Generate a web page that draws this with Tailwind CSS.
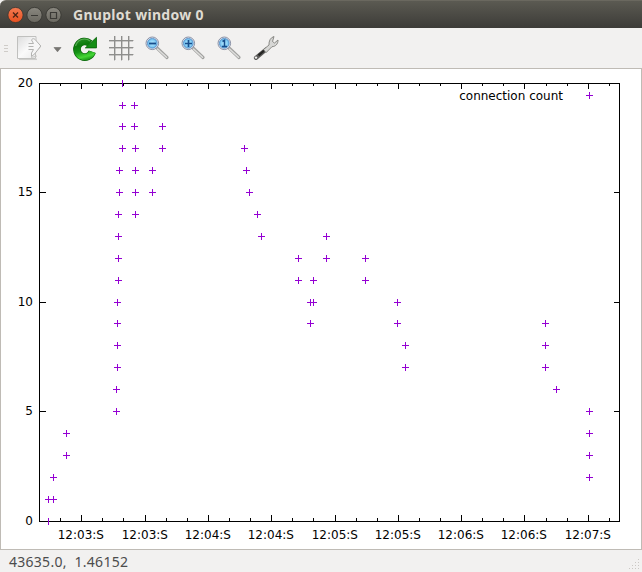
<!DOCTYPE html>
<html lang="en">
<head>
<meta charset="utf-8">
<title>Gnuplot window 0</title>
<script src="https://cdn.jsdelivr.net/npm/@tailwindcss/browser@4"></script>
</head>
<body class="w-[642px] h-[572px] overflow-hidden bg-[#f2f1f0] flex flex-col">
<header class="h-7 shrink-0 flex items-center bg-linear-to-b from-[#5b5a52] to-[#3d3c38] border-t border-[#6a685f] rounded-tl-md pl-[7px]">
  <svg width="56" height="18" viewBox="0 0 56 18" fill="none">
    <defs>
      <linearGradient id="cl" x2="0" y2="1"><stop stop-color="#f47b52"/><stop offset="1" stop-color="#e8501f"/></linearGradient>
      <linearGradient id="gr" x2="0" y2="1"><stop stop-color="#8a8880"/><stop offset="1" stop-color="#6a6860"/></linearGradient>
    </defs>
    <circle cx="8.500" cy="9" r="7.600" fill="url(#cl)" stroke="#3b3630" stroke-width=".8"/>
    <circle cx="27.500" cy="9" r="7.600" fill="url(#gr)" stroke="#34332e" stroke-width=".8"/>
    <circle cx="46.500" cy="9" r="7.600" fill="url(#gr)" stroke="#34332e" stroke-width=".8"/>
    <path d="M6 6.500l5 5M11 6.500l-5 5" stroke="#4b2415" stroke-width="1.300"/>
    <path d="M24 9.500h7M43.500 6.500h6v6h-6z" stroke="#3a3935" stroke-width="1.200"/>
  </svg>
  <h1 class="ml-[10px] font-['Noto_Sans'] font-bold text-[14px] leading-[20px] text-[#dfdbd2] whitespace-pre tracking-[0.29px]">Gnuplot window 0</h1>
</header>
<nav class="h-10 shrink-0 flex items-center">
  <svg width="290" height="40" viewBox="0 28 290 40" fill="none">
    <defs>
      <linearGradient id="pg" x2="1" y2="1"><stop stop-color="#dcdcdc"/><stop offset=".5" stop-color="#fafafa"/><stop offset="1" stop-color="#e6e6e6"/></linearGradient>
      <linearGradient id="gn" gradientUnits="userSpaceOnUse" x1="80" y1="37" x2="86" y2="60"><stop stop-color="#2f962b"/><stop offset=".35" stop-color="#0b7a0b"/><stop offset=".6" stop-color="#159215"/><stop offset=".85" stop-color="#45d636"/><stop offset="1" stop-color="#1a9a18"/></linearGradient>
      <radialGradient id="ln"><stop stop-color="#b9eaff"/><stop offset=".7" stop-color="#83cdf5"/><stop offset="1" stop-color="#5ba3dc"/></radialGradient>
      <g id="lens">
        <path d="M11 11L21.500 21" stroke="#a2a2a0" stroke-width="3.200" stroke-linecap="round"/>
        <path d="M12 12.500L21 20.700" stroke="#dededc" stroke-width="1.500" stroke-linecap="round"/>
        <circle cx="6.800" cy="6.800" r="6.300" fill="#e6e8ef" stroke="#8991a6"/>
        <circle cx="6.800" cy="6.800" r="4.900" fill="url(#ln)" stroke="#5b94cc" stroke-width=".8"/>
      </g>
    </defs>
    <path d="M4 45.500h4M4 48.500h4M4 51.500h4" stroke="#cfccc8"/>
    <path d="M19 59.300h18" stroke="#cfcfcd" stroke-width="1.500"/>
    <path d="M17.500 36.500h18.500v5l4.500 4.500v1l-5 4.500v7h-18z" fill="url(#pg)" stroke="#c0c0be"/>
    <path d="M28.500 43.500h5l-2-3.500c1-2 3-1.500 4 0l5.300 6-5.800 7.500-3.500 3v-3.500l2-3.500h-5M28.500 46.500h5" fill="#f6f6f6" stroke="#b3b3b1" stroke-linejoin="round"/>
    <path d="M31 57.500l6-1.500" stroke="#c8c8c6"/>
    <path d="M54 47.500h7l-3.500 4.300z" fill="#777672" stroke="#777672" stroke-width=".7"/>
    <path d="M89.800 43.300A7.800 7.800 0 1 0 92.200 51.700" stroke="#076207" stroke-width="7.600"/>
    <path d="M96.500 37.300v10.600H85.300z" fill="#118a11" stroke="#076207" stroke-width=".8" stroke-linejoin="round"/>
    <path d="M89.800 43.300A7.800 7.800 0 1 0 92.200 51.700" stroke="url(#gn)" stroke-width="6.400"/>
    <path d="M95.700 39.300v7.800h-8.200z" fill="#158e15"/>
    <path d="M75.500 46c1.500-4.500 5-7 9-7 2 0 4 .7 5.500 2" stroke="#7cc576" stroke-width="1.200" opacity=".6"/>
    <g fill="#8e8e8c" shape-rendering="crispEdges"><path d="M109 40h24v1h-24zM109 47h24v1h-24zM109 54h24v1h-24zM114 36h1v24h-1zM121 36h1v24h-1zM128 36h1v24h-1z" stroke="#8e8e8c" stroke-width=".4"/></g>
    <use href="#lens" x="145.500" y="36.500"/>
    <path d="M149 43.500h7" stroke="#164d8c" stroke-width="1.800"/>
    <use href="#lens" x="181.500" y="36.500"/>
    <path d="M185 43.500h7M188.500 40v7" stroke="#164d8c" stroke-width="1.700"/>
    <use href="#lens" x="217.500" y="36.500"/>
    <path d="M222.500 41.500l2-1.200v6M222 46.500h5" stroke="#164d8c" stroke-width="1.500"/>
    <path d="M266 49.500L256 57.800" stroke="#5b5b59" stroke-width="4.200" stroke-linecap="round"/>
    <path d="M266 49L258.500 55.300" stroke="#252523" stroke-width="2.200"/>
    <circle cx="256" cy="57.600" r="1.200" fill="#f2f1f0"/>
    <path d="M263.500 49.500l5.500-4.500c-.3-4 1.500-7.500 5-8.500l-1.500 5 2 1.500 3.500-3c.2 4-2.500 6.500-6 6.700l-6 6z" fill="#d7d7d5" stroke="#7f7f7b" stroke-width=".9" stroke-linejoin="round"/>
  </svg>
</nav>
<main class="h-[482px] shrink-0 border border-[#bfbbb5] bg-white">
  <svg id="plot" class="block" width="640" height="480" viewBox="1 69 640 480" font-family="'DejaVu Sans', sans-serif" font-size="12" fill="#000">
    <text x="563" y="100" text-anchor="end">connection count</text>
  </svg>
</main>
<footer class="grow flex items-center justify-between pl-[9px]">
  <span class="pt-[2px] font-['Noto_Sans'] text-[14px] leading-[20px] text-[#4c4c4c] whitespace-pre tracking-[0.27px]">43635.0,  1.46152</span>
  <svg class="self-end" width="14" height="14" fill="#cbc8c4"><path d="M10 1h1v1h-1zM7 4h1v1h-1zM10 4h1v1h-1zM4 7h1v1h-1zM7 7h1v1h-1zM10 7h1v1h-1zM1 10h1v1h-1zM4 10h1v1h-1zM7 10h1v1h-1zM10 10h1v1h-1z"/></svg>
</footer>
<script>
const plot = document.getElementById('plot');
const add = (tag, attrs, text) => {
  const el = document.createElementNS('http://www.w3.org/2000/svg', tag);
  for (const k in attrs) el.setAttribute(k, attrs[k]);
  if (text) el.textContent = text;
  plot.appendChild(el);
};
const rect = (x, y, width, height, fill = '#000') => add('rect', {x, y, width, height, fill, 'shape-rendering': 'crispEdges'});
// Pixel row of each count, 0 to 20
const rows = [521,499,477,455,433,411,389,367,345,323,302,280,258,236,214,192,170,148,126,105,83];
// [x, lowest count, highest count]
const series = [[48,0,1],[53,1,2],[66,3,4],[116,5,6],[117,7,10],[118,11,14],[119,15,16],[122,17,20],
  [135,14,17],[134,18,19],[152,15,16],[162,17,18],[244,17,17],[246,16,16],[249,15,15],[257,14,14],[261,13,13],
  [298,11,12],[310,9,10],[313,10,11],[326,12,13],[365,11,12],[397,9,10],[405,7,8],[545,7,9],[556,6,6],[589,2,5]];
const points = series.flatMap(([x, a, b]) => rows.slice(a, b + 1).map(y => [x, y]));
points.push([589, 95]);
const purple = '#9400d3';
points.forEach(([x, y]) => rect(x - 3, y, 7, 1, purple));
rect(39, 83, 581, 1); rect(39, 521, 581, 1); rect(39, 83, 1, 439); rect(619, 83, 1, 439);
[60,102,123,166,187,229,250,292,313,356,377,419,440,482,503,546,567,609].forEach(x => { rect(x, 83, 1, 3); rect(x, 518, 1, 4); });
[[81,'03'],[145,'03'],[208,'04'],[271,'04'],[335,'05'],[398,'05'],[461,'06'],[524,'06'],[588,'07']].forEach(([x, m]) => {
  rect(x, 83, 1, 6); rect(x, 515, 1, 7);
  add('text', {x: x - 23.3, y: 539}, `12:${m}:S`);
});
[0,5,10,15,20].forEach(v => {
  rect(39, rows[v], 7, 1); rect(614, rows[v], 6, 1);
  add('text', {x: 33, y: rows[v] + 4, 'text-anchor': 'end'}, String(v));
});
points.forEach(([x, y]) => rect(x, y - 3, 1, 7, purple));
</script>
</body>
</html>
